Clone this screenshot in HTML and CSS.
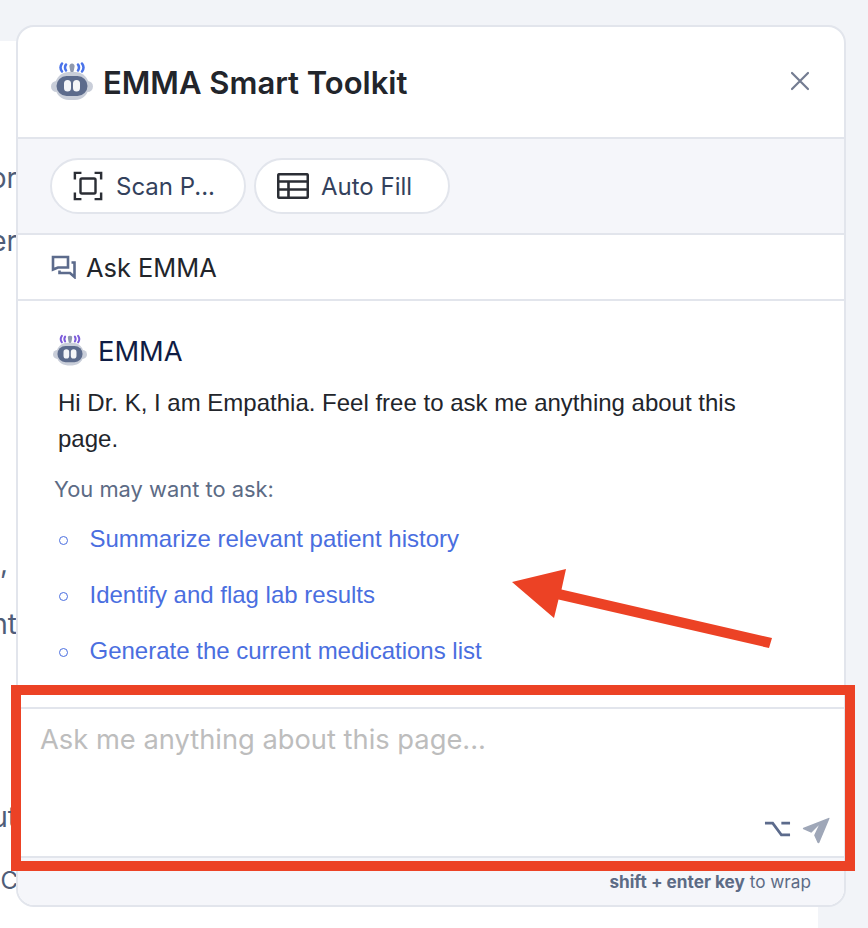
FILE: index.html
```html
<!DOCTYPE html>
<html lang="en">
<head>
<meta charset="utf-8">
<title>EMMA Smart Toolkit</title>
<link rel="stylesheet" href="styles.css">
</head>
<body>
<div class="page">
  <div class="backdrop">
    <span class="frag frag-1">or</span>
    <span class="frag frag-2">er</span>
    <span class="frag frag-3">,</span>
    <span class="frag frag-4">nt</span>
    <span class="frag frag-5">ut</span>
    <span class="frag frag-6">C</span>
  </div>
  <section class="card">
    <header class="head">
      <svg class="robot robot-lg signal-blue" viewBox="0 0 42 38">
        <path class="sig" d="M11 1.500q-3 4 0 8M15 2.500q-2 3 0 6M31 1.500q3 4 0 8M27 2.500q2 3 0 6"/>
        <path class="ant" d="M21 1.500a2.600 2.600 0 0 1 2.600 3q-.4 3-1.400 6h-2.400q-1-3-1.400-6a2.600 2.600 0 0 1 2.600-3z"/>
        <rect class="ear" x="0" y="19" width="42" height="11" rx="5.500"/>
        <rect class="shell" x="4" y="10" width="34" height="28" rx="14"/>
        <rect class="face" x="5.500" y="14" width="31" height="20" rx="10"/>
        <rect class="eye" x="13" y="18" width="7" height="11.500" rx="3.500"/>
        <rect class="eye" x="22" y="18" width="7" height="11.500" rx="3.500"/>
      </svg>
      <h1 class="title">EMMA Smart Toolkit</h1>
      <svg class="close" viewBox="0 0 20 20"><path d="M2 2l16 16M18 2L2 18"/></svg>
    </header>
    <div class="tools">
      <button class="pill pill-scan">
        <svg class="pill-icon" viewBox="0 0 32 32"><path d="M2 9V2h7M23 2h7v7M30 23v7h-7M9 30H2v-7"/><rect x="8" y="8" width="16" height="16" rx="1.500"/></svg>
        <span>Scan P...</span>
      </button>
      <button class="pill pill-fill">
        <svg class="pill-icon pill-table" viewBox="0 0 32 26"><rect x="1.200" y="1.200" width="29.600" height="23.600" rx="1.500"/><path d="M1 8.500h30M1 16.500h30M11.500 8.500v16.300"/></svg>
        <span>Auto Fill</span>
      </button>
    </div>
    <div class="tab">
      <svg class="chat" viewBox="0 0 24 24"><path d="M1.500 14.500V2h15v10.500H6.500l-5 2z"/><path d="M8 15.500v2.500h10.500l4.500 4V7.500h-3"/></svg>
      <span>Ask EMMA</span>
    </div>
    <div class="messages">
      <div class="sender">
        <svg class="robot robot-sm signal-purple" viewBox="0 0 42 38">
          <path class="sig" d="M11 1.500q-3 4 0 8M15 2.500q-2 3 0 6M31 1.500q3 4 0 8M27 2.500q2 3 0 6"/>
          <path class="ant" d="M21 1.500a2.600 2.600 0 0 1 2.600 3q-.4 3-1.400 6h-2.400q-1-3-1.400-6a2.600 2.600 0 0 1 2.600-3z"/>
          <rect class="ear" x="0" y="19" width="42" height="11" rx="5.500"/>
          <rect class="shell" x="4" y="10" width="34" height="28" rx="14"/>
          <rect class="face" x="5.500" y="14" width="31" height="20" rx="10"/>
          <rect class="eye" x="13" y="18" width="7" height="11.500" rx="3.500"/>
          <rect class="eye" x="22" y="18" width="7" height="11.500" rx="3.500"/>
        </svg>
        <span class="sender-name">EMMA</span>
      </div>
      <p class="greeting">Hi Dr. K, I am Empathia. Feel free to ask me anything about this page.</p>
      <p class="hint">You may want to ask:</p>
      <ul class="asks">
        <li>Summarize relevant patient history</li>
        <li>Identify and flag lab results</li>
        <li>Generate the current medications list</li>
      </ul>
    </div>
    <div class="composer">
      <div class="placeholder">Ask me anything about this page...</div>
      <div class="composer-icons">
        <svg class="option" viewBox="0 0 28 18"><path d="M1 3h8l9 12h9M18 3h9"/></svg>
        <svg class="send" viewBox="0 0 30 28"><path d="M29 1L1.500 11.500a1 1 0 0 0 0 1.800l8.500 3.700 8-8-5 10.500 3.500 8a1.200 1.200 0 0 0 2.200-.2L29.500 1.600A.5.500 0 0 0 29 1z"/></svg>
      </div>
    </div>
    <footer class="foot"><b>shift + enter key</b> to wrap</footer>
  </section>
  <div class="callout-box"></div>
  <svg class="callout-arrow" viewBox="0 0 868 928"><path d="M512 582L566 569L561.500 589.500L772 638L769 648L558.500 599.500L554 618Z"/></svg>
</div>
</body>
</html>
```
FILE: styles.css
```css
* { box-sizing: border-box; }
html, body { margin: 0; padding: 0; }
body { background: #ffffff; font-family: Inter, "Liberation Sans", sans-serif; }
.page {
  position: relative;
  width: 868px;
  height: 928px;
  overflow: hidden;
  background: linear-gradient(#f2f4f8 41px, #ffffff 41px);
  padding: 25px 22px 0 16px;
}
.page::after {
  content: "";
  position: absolute;
  top: 0;
  right: 0;
  width: 50px;
  height: 100%;
  background: #f2f4f8;
}
.backdrop { position: absolute; top: 0; left: 0; width: 16px; height: 100%; overflow: hidden; }
.frag {
  position: absolute;
  right: -1px;
  font-size: 28px;
  line-height: 30px;
  color: #4f5d78;
  white-space: nowrap;
}
.frag-1 { top: 163px; }
.frag-2 { top: 226px; }
.frag-3 { top: 548px; right: 8px; }
.frag-4 { top: 609px; }
.frag-5 { top: 802px; }
.frag-6 { top: 866px; right: -2px; font-size: 24px; }

.card {
  position: relative;
  z-index: 1;
  height: 882px;
  border: 2px solid #e2e5ec;
  border-radius: 18px;
  background: #ffffff;
  overflow: hidden;
  display: flex;
  flex-direction: column;
}
.head {
  height: 112px;
  flex: none;
  display: flex;
  align-items: center;
  padding: 0 33px;
  border-bottom: 2px solid #e2e5ec;
}
.robot-lg { width: 42px; height: 38px; margin-right: 10px; flex: none; margin-top: -2px; }
.robot-sm { width: 34px; height: 32px; margin-right: 11px; flex: none; }
.sig { fill: none; stroke-width: 2.500; stroke-linecap: round; }
.signal-blue .sig { stroke: #4a73ea; }
.signal-purple .sig { stroke: #7d5cdb; }
.ant { fill: #8f99ae; }
.ear { fill: #c9ced9; }
.shell { fill: #c9ced9; }
.face { fill: #5c6b8c; }
.eye { fill: #f4f5f8; }
.title {
  margin: 2px 0 0;
  font-size: 31px;
  font-weight: 600;
  line-height: 36px;
  color: #22252b;
  flex: 1;
}
.close { width: 20px; height: 20px; fill: none; stroke: #737c91; stroke-width: 2.200; stroke-linecap: round; margin-top: -2px; margin-right: 1px; }

.tools {
  height: 96px;
  flex: none;
  background: #f5f6fa;
  border-bottom: 2px solid #e2e5ec;
  display: flex;
  align-items: flex-start;
  gap: 8px;
  padding: 19px 0 0 32px;
}
.pill {
  height: 56px;
  border: 2px solid #e2e5ec;
  border-radius: 28px;
  background: #ffffff;
  display: flex;
  align-items: center;
  padding: 0;
  font-family: inherit;
  font-size: 24px;
  color: #33415c;
}
.pill-scan { width: 196px; padding-left: 21px; gap: 13px; }
.pill-fill { width: 196px; padding-left: 21px; gap: 12px; }
.pill-icon { width: 30px; height: 30px; fill: none; stroke: #2b2e35; stroke-width: 2.600; }
.pill-table { width: 32px; height: 26px; }

.tab {
  height: 66px;
  flex: none;
  border-bottom: 2px solid #e2e5ec;
  display: flex;
  align-items: center;
  gap: 10px;
  padding-left: 33px;
  font-size: 25.400px;
  color: #22252b;
}
.chat { width: 25px; height: 24px; fill: none; stroke: #5c6b8c; stroke-width: 2.600; }

.messages { height: 406px; flex: none; padding: 32px 0 0 35px; }
.sender { display: flex; align-items: center; height: 34px; font-size: 27.300px; color: #0f1c44; }
.sender-name { margin-top: 2px; }
.greeting {
  margin: 18px 60px 0 5px;
  font-family: "Liberation Sans", sans-serif;
  font-size: 24px;
  line-height: 36px;
  color: #22252b;
}
.hint { margin: 18px 0 0 1px; font-size: 21.900px; line-height: 28px; color: #5c6b85; }
.asks { list-style: none; margin: 18px 0 0 0; padding: 0; }
.asks li {
  position: relative;
  height: 56px;
  line-height: 36px;
  padding-left: 36.500px;
  font-family: "Liberation Sans", sans-serif;
  font-size: 24px;
  color: #4a6ee0;
}
.asks li::before {
  content: "";
  position: absolute;
  left: 6px;
  top: 15px;
  width: 7px;
  height: 7px;
  border: 1.500px solid #4a6ee0;
  border-radius: 50%;
}

.composer {
  height: 151px;
  flex: none;
  border-top: 2px solid #e2e5ec;
  border-bottom: 2px solid #e2e5ec;
  display: flex;
  flex-direction: column;
  justify-content: space-between;
  padding: 14px 14px 12px 22px;
}
.placeholder { font-size: 27.300px; line-height: 34px; color: #bdbdbd; }
.composer-icons { display: flex; justify-content: flex-end; align-items: center; gap: 11px; }
.option { width: 27px; height: 18px; margin-top: -2px; fill: none; stroke: #5c6b8c; stroke-width: 2.800; }
.send { width: 28px; height: 28px; fill: #9fa7b8; }

.foot {
  flex: 1;
  background: #f5f6fa;
  text-align: right;
  padding: 14px 33px 0 0;
  font-size: 17.200px;
  line-height: 20px;
  color: #5c6b85;
}
.foot b { font-weight: 700; }

.callout-box {
  position: absolute;
  z-index: 2;
  left: 11px;
  top: 685px;
  width: 844px;
  height: 186px;
  border: 10px solid #ec4225;
}
.callout-arrow {
  position: absolute;
  z-index: 2;
  left: 0;
  top: 0;
  width: 868px;
  height: 928px;
  fill: #ec4225;
}
```
